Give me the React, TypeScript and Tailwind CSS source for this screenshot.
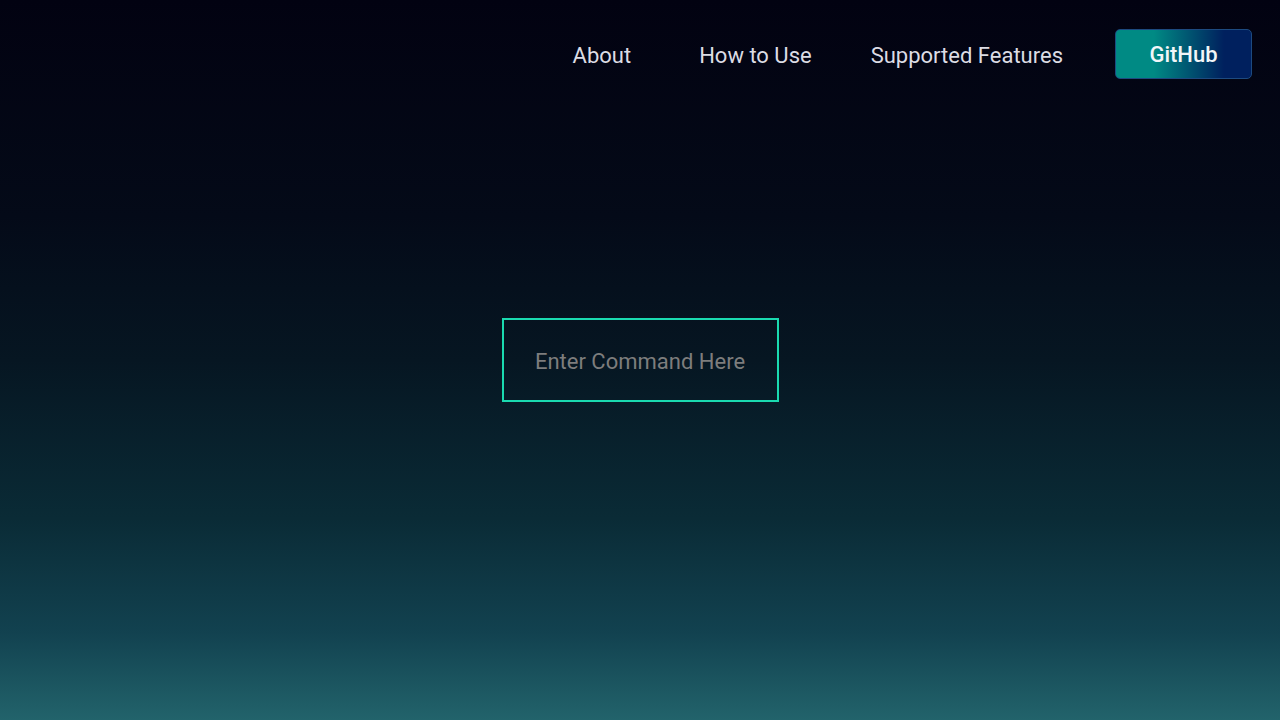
import React from 'react';

const links = ['About', 'How to Use', 'Supported Features'];

export default function App() {
    return (
        <div
            className="w-full h-[720px] flex flex-col pb-[108px] font-['Roboto',sans-serif] bg-[linear-gradient(to_bottom,#020211_0%,#040a18_30%,#061622_50%,#0a2b36_72%,#124250_88%,#22636b_100%)]"
        >
            <nav className="h-[108px] shrink-0 flex items-center justify-end pr-[28px]">
                <a className="text-[22px] text-[#dcdce4] mt-[2px] mr-[68px]">{links[0]}</a>
                <a className="text-[22px] text-[#dcdce4] mt-[2px] mr-[59px]">{links[1]}</a>
                <a className="text-[22px] text-[#dcdce4] mt-[2px] mr-[52px]">{links[2]}</a>
                <button className="w-[137px] h-[50px] rounded-[5px] border border-[#1d4a80] text-[22px] font-medium text-[#f2f6f8] bg-[linear-gradient(to_right,#008a84_28%,#00205e_80%)]">
                    GitHub
                </button>
            </nav>

            <main className="flex-1 flex items-center justify-center">
                <input
                    placeholder="Enter Command Here"
                    className="w-[277px] h-[84px] pt-[2px] border-2 border-[#1adab0] bg-transparent text-center text-[22px] text-[#cfcfcf] placeholder:text-[#7d7d7d] outline-none"
                />
            </main>
        </div>
    );
}
